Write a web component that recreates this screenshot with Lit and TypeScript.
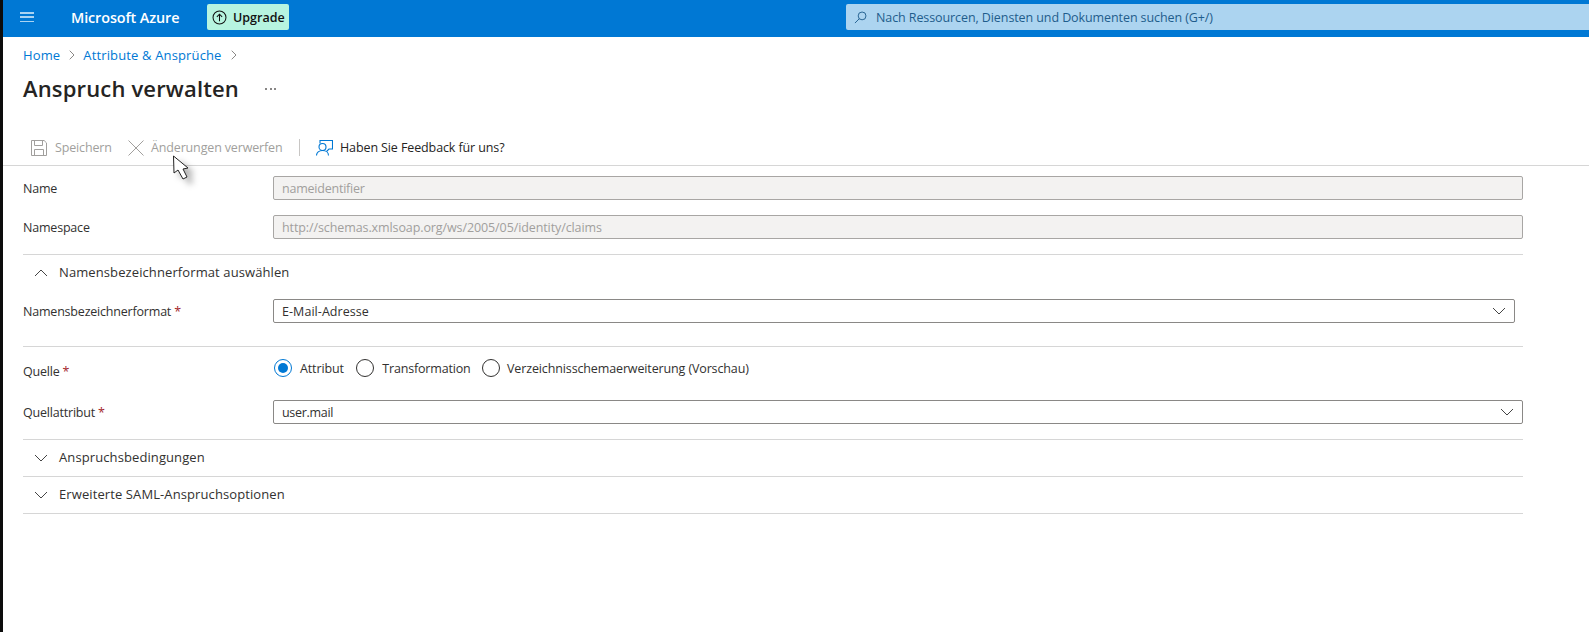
import { LitElement, html, css } from "lit";
import { customElement } from "lit/decorators.js";

const chevDown = html`<svg class="chev" viewBox="0 0 14 8" width="14" height="8"><path d="M1 1l6 6 6-6" fill="none" stroke="#444" stroke-width="1"/></svg>`;
const chevUp = html`<svg class="chev" viewBox="0 0 14 8" width="14" height="8"><path d="M1 7l6-6 6 6" fill="none" stroke="#444" stroke-width="1"/></svg>`;
const crumbChev = html`<svg viewBox="0 0 6 10" width="6" height="10"><path d="M.7.7L5 5 .7 9.3" fill="none" stroke="#8a8886" stroke-width="1"/></svg>`;

@customElement("app-root")
export class AppRoot extends LitElement {
  static styles = css`
    :host { display: flex; width: 1589px; height: 632px; overflow: hidden; background: #fff; color: #323130;
      font-family: "Open Sans", "Noto Sans", sans-serif; font-size: 12.5px; position: relative; }
    .strip { width: 3px; background: #0c0c0c; flex: none; }
    .main { flex: 1; min-width: 0; display: flex; flex-direction: column; }
    .top { height: 37px; box-sizing: border-box; padding-bottom: 3px; background: #0078d4; display: flex; align-items: center; flex: none; }
    .burger { width: 14px; margin-left: 17px; display: flex; flex-direction: column; gap: 2.75px; flex: none; }
    .burger i { display: block; height: 1.5px; background: #a9d3f2; }
    .brand { color: #fff; font-size: 14.4px; font-weight: 600; margin-left: 37px; width: 136px; letter-spacing: -0.1px; white-space: nowrap; flex: none; }
    .upgrade { width: 82px; height: 26px; flex: none; box-sizing: border-box; background: #b7f4e0; border-radius: 2px; display: flex; align-items: center; gap: 6px; padding-left: 5px; color: #111; font-weight: 600; font-size: 12.5px; }
    .search { margin-left: 557px; flex: 1; height: 26px; background: #acd4f0; border-radius: 2px 0 0 2px; display: flex; align-items: center; padding-left: 8px; gap: 9px; color: #1f5d8c; letter-spacing: -0.09px; box-sizing: border-box; white-space: nowrap; }
    .crumbs { display: flex; align-items: center; margin: 10px 0 0 20px; height: 16px; color: #0078d4; font-size: 13px; letter-spacing: 0.14px; }
    .crumbs svg { margin: 0 8px 0 9px; }
    .titlerow { display: flex; align-items: center; margin: 11px 0 0 20px; height: 30px; }
    h1 { margin: 0 0 2px; font-size: 22px; font-weight: 600; color: #252423; letter-spacing: 0.16px; width: 242px; white-space: nowrap; }
    .dots { display: flex; gap: 2.5px; }
    .dots i { width: 2px; height: 2px; border-radius: 50%; background: #605e5c; }
    .cmd { display: flex; align-items: center; height: 36px; margin-top: 26px; padding-left: 28px; border-bottom: 1px solid #d6d6d6; box-sizing: border-box; }
    .cmd svg { flex: none; }
    .cmd span { white-space: nowrap; letter-spacing: -0.15px; }
    .off { color: #a19f9d; }
    .s1 { margin-left: 8px; width: 73px; }
    .s2 { margin-left: 7px; width: 148px; }
    .vr { width: 1px; height: 17px; background: #c8c6c4; margin-right: 16px; flex: none; }
    .cmd .s3 { margin-left: 7px; color: #252423; letter-spacing: -0.11px; }
    .form { width: 1500px; margin-left: 20px; }
    .row { display: flex; align-items: center; }
    .lbl { width: 250px; flex: none; white-space: nowrap; letter-spacing: -0.2px; color: #323130; }
    .req { color: #a4262c; }
    .box { height: 24px; box-sizing: border-box; border: 1px solid #8a8886; border-radius: 2px; display: flex; align-items: center; justify-content: space-between; padding: 0 8px; letter-spacing: -0.1px; flex: 1; }
    .dis { background: #f3f2f1; color: #a19f9d; border-color: #a8a6a4; }
    .t-name { letter-spacing: -0.22px; }
    .t-mail { letter-spacing: 0.06px; }
    .t-user { letter-spacing: -0.3px; }
    .r1 { margin-top: 10px; }
    .r2 { margin-top: 15px; }
    .sec { display: flex; align-items: center; border-top: 1px solid #d6d6d6; height: 36px; padding-left: 11px; gap: 11px; font-size: 13px; letter-spacing: 0.1px; box-sizing: border-box; }
    .sec span { position: relative; top: -1px; }
    .sec.a { margin-top: 15px; }
    .r3 { margin-top: 9px; }
    .narrow { flex: none; width: 1242px; }
    .hr { border-top: 1px solid #d6d6d6; margin-top: 23px; }
    .r4 { margin-top: 10px; height: 22px; }
    .r4 .lbl { padding-top: 6px; }
    .radios { display: flex; align-items: center; margin-left: 1px; }
    .radio { width: 18px; height: 18px; box-sizing: border-box; border: 1px solid #323130; border-radius: 50%; flex: none; display: flex; align-items: center; justify-content: center; }
    .radio.on { border-color: #0078d4; }
    .radio.on::after { content: ""; width: 10px; height: 10px; border-radius: 50%; background: #0078d4; }
    .radios span { letter-spacing: -0.13px; white-space: nowrap; margin-left: 8px; margin-right: 12.5px; }
    .radios .tr { letter-spacing: -0.18px; margin-right: 11.500px; }
    .radios .vz { margin-left: 7px; }
    .r5 { margin-top: 21px; }
    .sec.b { margin-top: 15px; height: 37px; }
    .last { border-bottom: 1px solid #d6d6d6; height: 38px; }
    .cursor { position: absolute; left: 171px; top: 154px; filter: drop-shadow(6px 5px 3px rgba(0,0,0,.3)); }
  `;

  render() {
    return html`
      <div class="strip"></div>
      <div class="main">
        <div class="top">
          <div class="burger"><i></i><i></i><i></i></div>
          <div class="brand">Microsoft Azure</div>
          <div class="upgrade">
            <svg viewBox="0 0 16 16" width="15" height="15"><circle cx="8" cy="8" r="6.9" fill="none" stroke="#111" stroke-width="1.1"/><path d="M8 12V4.6M5.2 7.3L8 4.5l2.8 2.8" fill="none" stroke="#111" stroke-width="1.1"/></svg>
            Upgrade
          </div>
          <div class="search">
            <svg viewBox="0 0 14 14" width="13" height="13"><circle cx="8.7" cy="5.3" r="4.2" fill="none" stroke="#1f5d8c" stroke-width="1"/><path d="M5.7 8.3L1 13" stroke="#1f5d8c" stroke-width="1" fill="none"/></svg>
            Nach Ressourcen, Diensten und Dokumenten suchen (G+/)
          </div>
        </div>
        <div class="crumbs">Home${crumbChev}Attribute &amp; Ansprüche${crumbChev}</div>
        <div class="titlerow"><h1>Anspruch verwalten</h1><div class="dots"><i></i><i></i><i></i></div></div>
        <div class="cmd">
          <svg viewBox="0 0 16 16" width="16" height="16"><path d="M.5.5h12.6l2.4 2.4v12.6H.5z" fill="none" stroke="#a19f9d"/><path d="M3.5.5v5h8v-5M3.5 15.5v-6h9v6" fill="none" stroke="#a19f9d"/></svg>
          <span class="off s1">Speichern</span>
          <svg viewBox="0 0 16 16" width="16" height="16"><path d="M.5.5l15 15M15.5.5l-15 15" stroke="#a19f9d" fill="none"/></svg>
          <span class="off s2">Änderungen verwerfen</span>
          <div class="vr"></div>
          <svg viewBox="0 0 17 16" width="17" height="16"><path d="M4 3.5V.5h12.500V9H13l-2.500 2.500" fill="none" stroke="#0078d4" stroke-width="1.1"/><circle cx="6.500" cy="7" r="3.500" fill="none" stroke="#0078d4" stroke-width="1.1"/><path d="M.5 15.500c0-3 2.500-5 6-5s6 2 6 5" fill="none" stroke="#0078d4" stroke-width="1.1"/></svg>
          <span class="s3">Haben Sie Feedback für uns?</span>
        </div>
        <div class="form">
          <div class="row r1"><div class="lbl">Name</div><div class="box dis t-name">nameidentifier</div></div>
          <div class="row r2"><div class="lbl">Namespace</div><div class="box dis">http://schemas.xmlsoap.org/ws/2005/05/identity/claims</div></div>
          <div class="sec a">${chevUp}<span>Namensbezeichnerformat auswählen</span></div>
          <div class="row r3"><div class="lbl">Namensbezeichnerformat <span class="req">*</span></div><div class="box narrow t-mail">E-Mail-Adresse ${chevDown}</div></div>
          <div class="hr"></div>
          <div class="row r4"><div class="lbl">Quelle <span class="req">*</span></div>
            <div class="radios"><div class="radio on"></div><span>Attribut</span><div class="radio"></div><span class="tr">Transformation</span><div class="radio"></div><span class="vz">Verzeichnisschemaerweiterung (Vorschau)</span></div>
          </div>
          <div class="row r5"><div class="lbl">Quellattribut <span class="req">*</span></div><div class="box t-user">user.mail ${chevDown}</div></div>
          <div class="sec b">${chevDown}<span>Anspruchsbedingungen</span></div>
          <div class="sec last">${chevDown}<span>Erweiterte SAML-Anspruchsoptionen</span></div>
        </div>
      </div>
      <svg class="cursor" viewBox="0 0 22 28" width="22" height="28">
        <path d="M2.500 2L3 19l4-3 5 9 4-2-4-8 5-1z" fill="#fff" stroke="#222" stroke-width="1"/>
      </svg>
    `;
  }
}
